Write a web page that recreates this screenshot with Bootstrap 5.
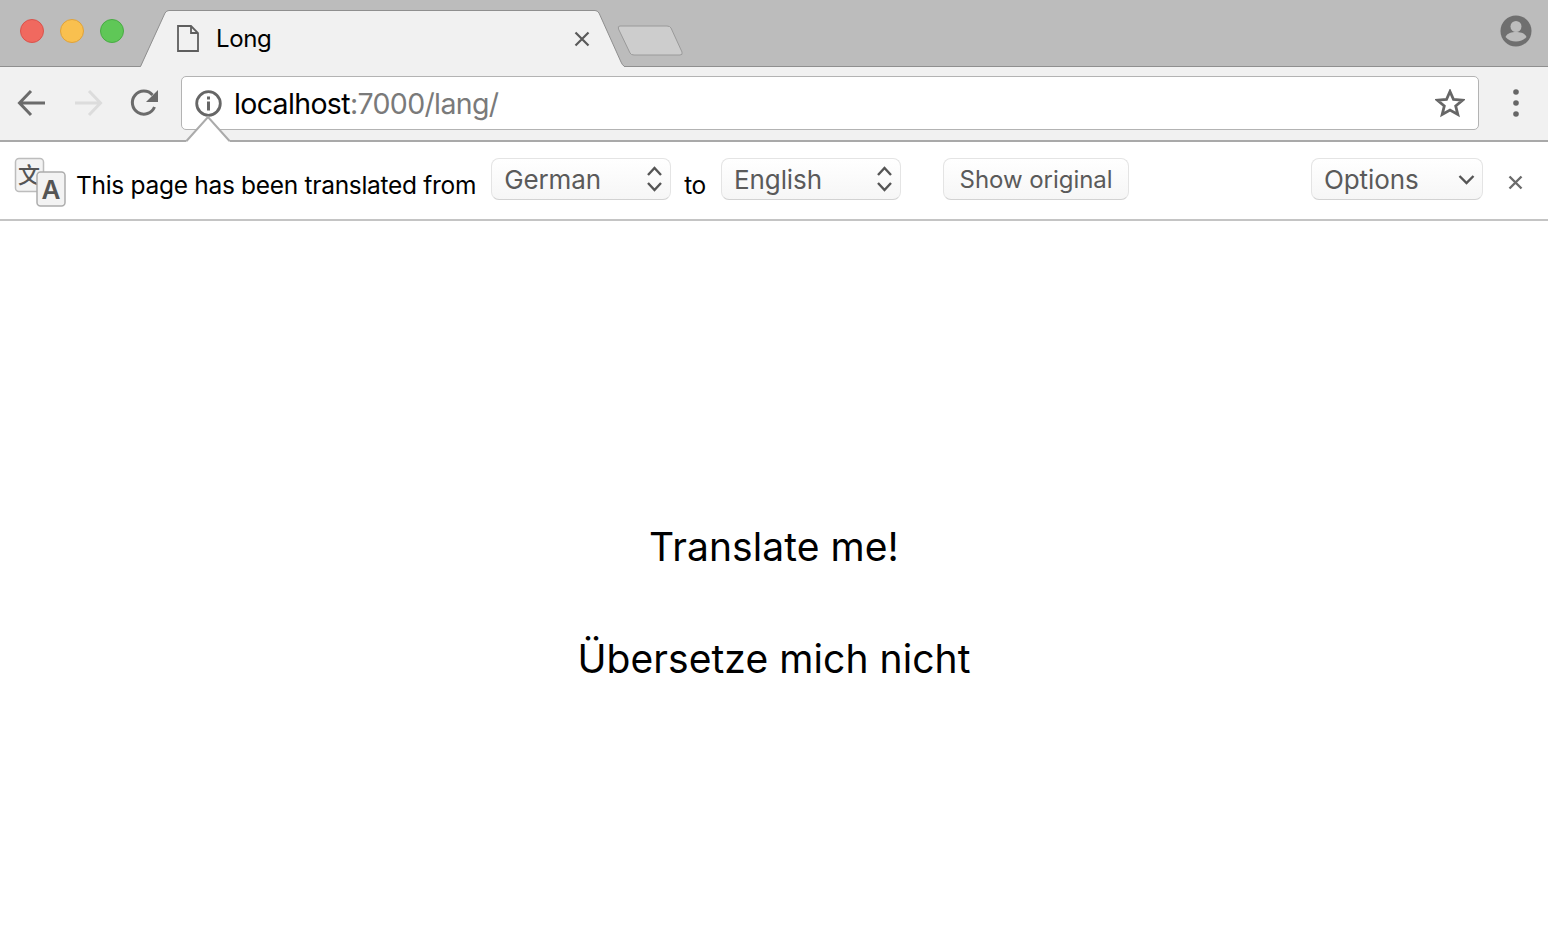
<!DOCTYPE html>
<html lang="en">
<head>
  <meta charset="UTF-8" />
  <meta name="viewport" content="width=device-width, initial-scale=1.0"/>
  <title>Long</title>
  <link href="https://cdn.jsdelivr.net/npm/bootstrap@5.3.3/dist/css/bootstrap.min.css" rel="stylesheet">
  <style>
    body { font-family: Inter, "Liberation Sans", sans-serif; background: #fff; color: #000; }
    svg { display: block; flex: none; }

    .tab-strip { height: 67px; background: #bcbcbc; border-bottom: 1px solid #8f8f8f; }
    .traffic { width: 24px; height: 24px; border-radius: 50%; border: 1px solid; }
    .traffic-group { gap: 16px; padding: 0 0 5px 20px; width: 140px; }
    .traffic-red { background: #f0695f; border-color: #d9534c; }
    .traffic-yellow { background: #f9c04f; border-color: #dfa23a; }
    .traffic-green { background: #5fc757; border-color: #49ab44; }
    .tab-item { width: 484px; height: 57px; margin-top: 10px; position: relative; z-index: 1; }
    .tab-shape { position: absolute; left: 0; top: 0; }
    .tab-body { position: relative; height: 57px; padding: 0 34px 0 37px; font-size: 24px; letter-spacing: -.4px; }
    .tab-title { margin-left: 17px; line-height: 1; margin-top: 1px; }
    .new-tab { margin: 25px 0 0 -7px; }
    .avatar-slot { margin-right: 16px; margin-bottom: 5px; }

    .tool-bar { height: 75px; background: #f1f1f1; border-bottom: 2px solid #a9a9a9; position: relative; z-index: 2; padding: 9px 0 0 17px; }
    .nav-icons { width: 164px; gap: 26px; height: 54px; }
    .addr-box { width: 1298px; height: 54px; background: #fff; border: 1px solid #b3b3b3; border-radius: 5px; padding: 0 13px; }
    .addr-text { font-size: 28.5px; letter-spacing: -.65px; line-height: 1; margin: 3px 0 0 12px; color: #7a7a7a; }
    .addr-host { color: #000; }
    .menu-dots { height: 54px; padding-left: 5px; }
    .bubble-tip { position: absolute; left: 185px; top: 38px; }

    .info-bar { height: 79px; background: #fff; border-bottom: 2px solid #c4c4c4; padding-left: 14px; position: relative; }
    .translate-mark { margin-top: 3px; }
    .info-text { font-size: 24.5px; letter-spacing: -.3px; line-height: 1; white-space: nowrap; margin-top: 9px; }
    .info-lead { margin-left: 9px; }
    .info-btn { height: 42px; background: linear-gradient(#fff, #f6f6f6); border: 1px solid #e4e4e4; border-bottom-color: #d2d2d2; border-radius: 8px; color: #5a5a5a; font-size: 26px; letter-spacing: -.1px; line-height: 1; padding: 0 7px 0 12px; white-space: nowrap; }
    .info-btn span { margin-top: 2px; }
    .select-one { width: 180px; margin: -3px 13px 0 15px; }
    .select-two { width: 180px; margin: -3px 0 0 15px; }
    .show-btn { margin: -3px 0 0 42px; width: 186px; justify-content: center; font-size: 24px; letter-spacing: -.05px; padding: 0; }
    .opts-btn { width: 172px; margin-top: -3px; }
    .close-x { margin: 3px 25px 0 25px; }
    .page-copy { padding-top: 302px; font-size: 39px; letter-spacing: .08px; line-height: 48px; }
    .page-copy p { margin: 0 0 64px; }
  </style>
</head>
<body>

  <div class="tab-strip d-flex">
    <div class="traffic-group d-flex align-items-center">
      <div class="traffic traffic-red"></div>
      <div class="traffic traffic-yellow"></div>
      <div class="traffic traffic-green"></div>
    </div>
    <div class="tab-item">
      <svg class="tab-shape" width="484" height="57" viewBox="0 0 484 57">
        <path d="M0.5 57 L25 3 Q26.5 .5 29 .5 H455 Q457.5 .5 459 3 L481 52 Q483 56 484 56 V57 Z" fill="#f1f1f1"/>
        <path d="M0.5 56.5 L25 3 Q26.5 .5 29 .5 H455 Q457.5 .5 459 3 L481 52 Q482.5 55.5 484 56" fill="none" stroke="#8f8f8f"/>
      </svg>
      <div class="tab-body d-flex align-items-center">
        <svg width="22" height="27" viewBox="0 0 22 27">
          <path d="M1 1 H14 L21 8 V26 H1 Z M14 1 V8 H21" fill="none" stroke="#5e5e5e" stroke-width="1.8"/>
        </svg>
        <span class="tab-title flex-grow-1">Long</span>
        <svg width="16" height="16" viewBox="0 0 16 16">
          <path d="M1.5 1.5 L14.5 14.5 M14.5 1.5 L1.5 14.5" stroke="#5a5a5a" stroke-width="2.2"/>
        </svg>
      </div>
    </div>
    <svg class="new-tab" width="68" height="33" viewBox="0 0 68 33">
      <path d="M3 1 H50 Q53 1 54 3 L65 27 Q66 30 63 30 H17 Q14 30 13 28 L1.500 4 Q.5 1 3 1 Z" fill="#cdcdcd" stroke="#9a9a9a"/>
    </svg>
    <div class="flex-grow-1"></div>
    <div class="avatar-slot d-flex align-items-center">
      <svg width="32" height="32" viewBox="0 0 32 32">
        <circle cx="16" cy="16" r="15.500" fill="#6f6f6f"/>
        <circle cx="16" cy="11.500" r="5.500" fill="#bcbcbc"/>
        <path d="M5.500 22 C7 18 12 17 16 17 S25 18 26.500 22 C24 25 20 26.500 16 26.500 S8 25 5.500 22 Z" fill="#bcbcbc"/>
      </svg>
    </div>
  </div>

  <div class="tool-bar d-flex">
    <div class="nav-icons d-flex align-items-center">
      <svg width="30" height="28" viewBox="0 0 30 28">
        <path d="M28 14 H3 M14 2 L2.500 14 L14 26" fill="none" stroke="#6b6b6b" stroke-width="3"/>
      </svg>
      <svg width="30" height="28" viewBox="0 0 30 28">
        <path d="M2 14 H27 M16 2 L27.500 14 L16 26" fill="none" stroke="#dcdcdc" stroke-width="3"/>
      </svg>
      <svg width="30" height="28" viewBox="0 0 30 28">
        <path d="M25.500 18 A11.500 11.500 0 1 1 23.500 6" fill="none" stroke="#6b6b6b" stroke-width="3"/>
        <path d="M29 1 V13 H17 Z" fill="#6b6b6b"/>
      </svg>
    </div>
    <div class="addr-box d-flex align-items-center">
      <svg width="27" height="27" viewBox="0 0 27 27">
        <circle cx="13.500" cy="13.500" r="11.800" fill="none" stroke="#666" stroke-width="2.800"/>
        <rect x="12" y="11.500" width="3" height="9" fill="#666"/>
        <rect x="12" y="6.500" width="3" height="3" fill="#666"/>
      </svg>
      <span class="addr-text flex-grow-1"><span class="addr-host">localhost</span>:7000/lang/</span>
      <svg width="30" height="29" viewBox="0 0 30 29">
        <path d="M15 2.500 L18.500 10.500 L27.500 11.200 L20.700 17 L22.800 25.500 L15 21 L7.200 25.500 L9.300 17 L2.500 11.200 L11.500 10.500 Z" fill="none" stroke="#666" stroke-width="2.800"/>
      </svg>
    </div>
    <div class="menu-dots flex-grow-1 d-flex align-items-center justify-content-center">
      <svg width="6" height="28" viewBox="0 0 6 28">
        <circle cx="3" cy="3" r="2.800" fill="#666"/>
        <circle cx="3" cy="14" r="2.800" fill="#666"/>
        <circle cx="3" cy="25" r="2.800" fill="#666"/>
      </svg>
    </div>
    <svg class="bubble-tip" width="46" height="37" viewBox="0 0 46 37">
      <path d="M1 37 L23 12 L45 37 Z" fill="#fff"/>
      <path d="M1.500 36 L23 12 L44.500 36" fill="none" stroke="#ababab" stroke-width="2"/>
    </svg>
  </div>

  <div class="info-bar d-flex align-items-center">
    <svg class="translate-mark" width="53" height="50" viewBox="0 0 53 50">
      <rect x="1.500" y="1.500" width="28" height="33" rx="3.500" fill="#f3f3f3" stroke="#bdbdbd" stroke-width="1.500"/>
      <text x="15" y="26" font-size="22" font-weight="500" text-anchor="middle" fill="#555" font-family="'Noto Sans CJK SC', sans-serif">文</text>
      <rect x="23" y="15" width="28" height="34" rx="3.500" fill="#f3f3f3" stroke="#adadad" stroke-width="1.500"/>
      <text x="37" y="42" font-size="26" font-weight="600" text-anchor="middle" fill="#555" font-family="Inter, sans-serif">A</text>
    </svg>
    <span class="info-text info-lead">This page has been translated from</span>
    <button class="btn info-btn d-flex align-items-center justify-content-between select-one" type="button">
      <span>German</span>
      <svg width="17" height="28" viewBox="0 0 17 28"><path d="M2 10 L8.500 3 L15 10 M2 18 L8.500 25 L15 18" fill="none" stroke="#555" stroke-width="2.400"/></svg>
    </button>
    <span class="info-text">to</span>
    <button class="btn info-btn d-flex align-items-center justify-content-between select-two" type="button">
      <span>English</span>
      <svg width="17" height="28" viewBox="0 0 17 28"><path d="M2 10 L8.500 3 L15 10 M2 18 L8.500 25 L15 18" fill="none" stroke="#555" stroke-width="2.400"/></svg>
    </button>
    <button class="btn info-btn d-flex align-items-center show-btn" type="button"><span>Show original</span></button>
    <div class="flex-grow-1"></div>
    <button class="btn info-btn d-flex align-items-center justify-content-between opts-btn" type="button">
      <span>Options</span>
      <svg width="17" height="11" viewBox="0 0 17 11"><path d="M1.500 2 L8.500 9 L15.500 2" fill="none" stroke="#555" stroke-width="2.400"/></svg>
    </button>
    <svg class="close-x" width="15" height="15" viewBox="0 0 15 15"><path d="M1.500 1.500 L13.500 13.500 M13.500 1.500 L1.500 13.500" stroke="#6b6b6b" stroke-width="2.400"/></svg>
  </div>

  <main class="page-copy text-center">
    <p>Translate me!</p>
    <p>Übersetze mich nicht</p>
  </main>

</body>
</html>
